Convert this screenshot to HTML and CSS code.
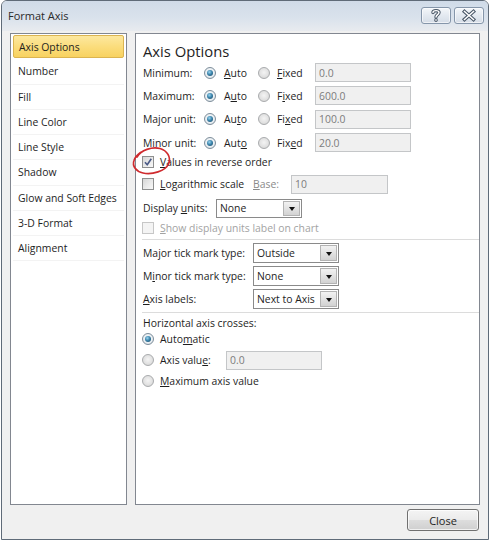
FILE: index.html
```html
<!DOCTYPE html>
<html>
<head>
<meta charset="utf-8">
<title>Format Axis</title>
<link rel="stylesheet" href="styles.css">
</head>
<body>
<div class="window">
  <div class="titlebar">
    <span class="title">Format Axis</span>
    <div class="tb-buttons">
      <div class="tb-btn">
        <svg class="tb-icon" viewBox="0 0 30 17" width="30" height="17">
          <g fill="none" stroke-linecap="round" stroke-linejoin="round">
            <path d="M12 5.6 C12 3, 18 3, 18 5.6 C18 7.6, 15 7.6, 15 10" stroke="#4a5868" stroke-width="3.4"/>
            <path d="M15 12.8 L15 13.2" stroke="#4a5868" stroke-width="3.4"/>
            <path d="M12 5.6 C12 3, 18 3, 18 5.6 C18 7.6, 15 7.6, 15 10" stroke="#ffffff" stroke-width="1.4"/>
            <path d="M15 12.8 L15 13.2" stroke="#ffffff" stroke-width="1.4"/>
          </g>
        </svg>
      </div>
      <div class="tb-btn">
        <svg class="tb-icon" viewBox="0 0 30 17" width="30" height="17">
          <g fill="none" stroke-linecap="square">
            <path d="M10.5 4.5 L19.5 12.5 M19.5 4.5 L10.5 12.5" stroke="#4a5868" stroke-width="3.6"/>
            <path d="M10.5 4.5 L19.5 12.5 M19.5 4.5 L10.5 12.5" stroke="#ffffff" stroke-width="1.5"/>
          </g>
        </svg>
      </div>
    </div>
  </div>

  <div class="content">
    <ul class="nav">
      <li class="nav-item active">Axis Options</li>
      <li class="nav-item">Number</li>
      <li class="nav-item">Fill</li>
      <li class="nav-item">Line Color</li>
      <li class="nav-item">Line Style</li>
      <li class="nav-item">Shadow</li>
      <li class="nav-item">Glow and Soft Edges</li>
      <li class="nav-item">3-D Format</li>
      <li class="nav-item">Alignment</li>
    </ul>

    <div class="pane">
      <div class="heading">Axis Options</div>

      <div class="opt-row">
        <span class="lbl">Minimum:</span>
        <span class="rg auto"><span class="radio on"></span><span><u>A</u>uto</span></span>
        <span class="rg fixed"><span class="radio"></span><span><u>F</u>ixed</span></span>
        <span class="input w96">0.0</span>
      </div>
      <div class="opt-row">
        <span class="lbl">Maximum:</span>
        <span class="rg auto"><span class="radio on"></span><span>A<u>u</u>to</span></span>
        <span class="rg fixed"><span class="radio"></span><span>F<u>i</u>xed</span></span>
        <span class="input w96">600.0</span>
      </div>
      <div class="opt-row">
        <span class="lbl">Major unit:</span>
        <span class="rg auto"><span class="radio on"></span><span>Au<u>t</u>o</span></span>
        <span class="rg fixed"><span class="radio"></span><span>Fi<u>x</u>ed</span></span>
        <span class="input w96">100.0</span>
      </div>
      <div class="opt-row">
        <span class="lbl">Minor unit:</span>
        <span class="rg auto"><span class="radio on"></span><span>Aut<u>o</u></span></span>
        <span class="rg fixed"><span class="radio"></span><span>Fix<u>e</u>d</span></span>
        <span class="input w96">20.0</span>
      </div>

      <div class="row h16">
        <span class="check on">
          <svg viewBox="0 0 12 12" width="12" height="12"><path d="M3 6.2 L5.2 8.8 L9.3 2.8" fill="none" stroke="#4b5a86" stroke-width="1.6" stroke-linejoin="round"/></svg>
        </span>
        <span class="cl"><u>V</u>alues in reverse order</span>
      </div>
      <div class="row h28">
        <span class="cgroup"><span class="check"></span><span class="cl"><u>L</u>ogarithmic scale</span></span>
        <span class="base-lbl"><u>B</u>ase:</span>
        <span class="input w97">10</span>
      </div>
      <div class="row h20">
        <span class="du-lbl">Display <u>u</u>nits:</span>
        <span class="select">
          <span class="sel-text">None</span>
          <span class="dd-btn"><span class="tri"></span></span>
        </span>
      </div>
      <div class="row h20">
        <span class="check disabled"></span>
        <span class="cl gray"><u>S</u>how display units label on chart</span>
      </div>

      <div class="sep sep-a"></div>

      <div class="row h20 mt3">
        <span class="tick-lbl">Ma<u>j</u>or tick mark type:</span>
        <span class="select tall">
          <span class="sel-text">Outside</span>
          <span class="dd-btn"><span class="tri"></span></span>
        </span>
      </div>
      <div class="row h20 mt3">
        <span class="tick-lbl">M<u>i</u>nor tick mark type:</span>
        <span class="select tall">
          <span class="sel-text">None</span>
          <span class="dd-btn"><span class="tri"></span></span>
        </span>
      </div>
      <div class="row h20 mt3">
        <span class="tick-lbl"><u>A</u>xis labels:</span>
        <span class="select tall">
          <span class="sel-text">Next to Axis</span>
          <span class="dd-btn"><span class="tri"></span></span>
        </span>
      </div>

      <div class="sep sep-b"></div>

      <div class="row h16 mt2">
        <span class="lbl-plain">Horizontal axis crosses:</span>
      </div>
      <div class="row h16">
        <span class="radio on"></span>
        <span class="cl">Auto<u>m</u>atic</span>
      </div>
      <div class="row h20 mt3">
        <span class="av-group"><span class="radio"></span><span class="cl">Axis valu<u>e</u>:</span></span>
        <span class="input w96">0.0</span>
      </div>
      <div class="row h16 mt3">
        <span class="radio"></span>
        <span class="cl"><u>M</u>aximum axis value</span>
      </div>
    </div>
  </div>

  <div class="footer">
    <div class="close-btn">Close</div>
  </div>

  <svg class="annot" viewBox="130 140 45 40" width="45" height="40">
    <path d="M137 157 C141 150, 152 146.5, 160 148.5 C167 150.5, 171.5 157, 168.5 164 C165.5 171, 152 175, 143 173 C136 171.5, 132 166, 134 160.5 C135 157.5, 137 155, 140.5 152.5" fill="none" stroke="#cf2a2e" stroke-width="1.7" stroke-linecap="round"/>
  </svg>
</div>
</body>
</html>
```

FILE: styles.css
```css
* {
  box-sizing: border-box;
}

body {
  margin: 0;
  background: #ffffff;
  font-family: "Open Sans", "Noto Sans", sans-serif;
  font-size: 10.4px;
  color: #1e1e1e;
}

u {
  text-decoration-thickness: 1px;
  text-underline-offset: 1px;
}

.window {
  position: relative;
  margin-left: 1px;
  width: 488px;
  height: 540px;
  border: 1px solid #5f6b78;
  border-radius: 6px 6px 0 0;
  background: #f0f0f0;
  display: flex;
  flex-direction: column;
  overflow: hidden;
}

/* Title bar */
.titlebar {
  height: 30px;
  flex: none;
  display: flex;
  align-items: center;
  justify-content: space-between;
  padding: 0 4px 0 6px;
  background: linear-gradient(#d0dbe8 0%, #d9e2ec 55%, #e8ebef 100%);
}

.title {
  font-size: 11px;
  color: #2a2a2a;
  margin-top: -1px;
}

.tb-buttons {
  display: flex;
  gap: 3px;
  margin-top: -1px;
}

.tb-btn {
  width: 30px;
  height: 17px;
  border: 1px solid #8596aa;
  border-radius: 3px;
  background: linear-gradient(#f4f7fa 0%, #e3e9f0 50%, #d5dde7 100%);
  box-shadow: inset 0 0 0 1px rgba(255, 255, 255, 0.6);
  display: flex;
  align-items: center;
  justify-content: center;
  overflow: hidden;
}

.tb-icon {
  display: block;
  flex: none;
}

/* Content */
.content {
  height: 474px;
  flex: none;
  display: flex;
  gap: 8px;
  padding: 2px 8px 0 8px;
}

.nav {
  width: 117px;
  height: 472px;
  flex: none;
  margin: 0;
  padding: 0 2px;
  list-style: none;
  background: #ffffff;
  border: 1px solid #828790;
}

.nav-item {
  height: 25.25px;
  display: flex;
  align-items: center;
  padding-left: 5px;
  border-bottom: 1px solid #f3f3f3;
  white-space: nowrap;
}

.nav-item.active {
  height: 23px;
  margin: 1px 0 1.25px;
  border: 1px solid #dbb450;
  border-radius: 2px;
  background: linear-gradient(#fde89f 0%, #fbdd7d 50%, #f8d260 100%);
}

.pane {
  flex: 1;
  height: 472px;
  background: #ffffff;
  border: 1px solid #828790;
  padding-left: 6px;
  display: flex;
  flex-direction: column;
}

.heading {
  font-size: 14.8px;
  line-height: 20px;
  height: 20px;
  margin-top: 7px;
  padding-left: 1px;
  color: #1e1e1e;
  flex: none;
}

.opt-row {
  height: 23.3px;
  flex: none;
  display: flex;
  align-items: center;
}

.row {
  flex: none;
  display: flex;
  align-items: center;
}

.h16 { height: 16px; }
.h20 { height: 20px; }
.h28 { height: 28px; }
.mt2 { margin-top: 2px; }
.mt3 { margin-top: 3px; }

.lbl {
  width: 62px;
  padding-left: 1px;
  flex: none;
}

.rg {
  display: flex;
  align-items: center;
  flex: none;
}

.rg.auto {
  width: 54px;
  gap: 8px;
}

.rg.fixed {
  width: 57px;
  gap: 7px;
}

.radio {
  width: 12px;
  height: 12px;
  flex: none;
  border-radius: 50%;
  border: 1px solid #a9abad;
  background: radial-gradient(circle at 50% 45%, #f4f4f4 0%, #e2e2e2 55%, #cfcfcf 100%);
  position: relative;
}

.radio.on {
  border-color: #7d8d9a;
  background: radial-gradient(circle at 50% 45%, #ffffff 0%, #e8eef2 60%, #c6d0d7 100%);
}

.radio.on::after {
  content: "";
  position: absolute;
  left: 2px;
  top: 2px;
  width: 6px;
  height: 6px;
  border-radius: 50%;
  background: radial-gradient(circle at 40% 35%, #9bd5f0 0%, #3d86ad 45%, #123f5c 100%);
}

.input {
  height: 19px;
  flex: none;
  display: flex;
  align-items: center;
  padding-left: 3px;
  border: 1px solid #c4c6c8;
  background: #f0f0f0;
  color: #7c7c7c;
}

.w96 { width: 96px; }
.w97 { width: 97px; }

.check {
  width: 12px;
  height: 12px;
  flex: none;
  border: 1px solid #8e8f8f;
  background: linear-gradient(135deg, #d6d6d6 0%, #ececec 60%, #f8f8f8 100%);
  display: flex;
}

.check svg {
  display: block;
  margin: -1px;
}

.check.disabled {
  border-color: #c7c7c7;
  background: #f4f4f4;
}

.cl {
  margin-left: 6px;
  white-space: nowrap;
}

.cl.gray {
  color: #a3a3a3;
}

.cgroup {
  width: 111px;
  flex: none;
  display: flex;
  align-items: center;
}

.base-lbl {
  width: 38px;
  flex: none;
  color: #8a8a8a;
}

.du-lbl {
  width: 74px;
  flex: none;
  padding-left: 1px;
}

.tick-lbl {
  width: 111px;
  flex: none;
  padding-left: 1px;
}

.lbl-plain {
  padding-left: 1px;
}

.av-group {
  width: 84px;
  flex: none;
  display: flex;
  align-items: center;
}

.select {
  width: 86px;
  height: 19px;
  flex: none;
  display: flex;
  padding: 1px;
  border: 1px solid #8a8a8a;
  background: #ffffff;
}

.select.tall {
  height: 20px;
}

.sel-text {
  flex: 1;
  display: flex;
  align-items: center;
  padding-left: 2px;
  white-space: nowrap;
  overflow: hidden;
}

.dd-btn {
  width: 17px;
  flex: none;
  display: flex;
  align-items: center;
  justify-content: center;
  border: 1px solid #b3b3b3;
  background: linear-gradient(#f2f2f2 0%, #e2e2e2 50%, #d2d2d2 100%);
}

.tri {
  width: 0;
  height: 0;
  border-left: 3.5px solid transparent;
  border-right: 3.5px solid transparent;
  border-top: 4px solid #111111;
  margin-top: 1px;
}

.sep {
  height: 1px;
  flex: none;
  background: #dcdcdc;
}

.sep-a { margin-top: 1px; }
.sep-b { margin-top: 3px; }

/* Footer */
.footer {
  flex: none;
  display: flex;
  justify-content: flex-end;
  padding: 4px 9px 0 0;
}

.close-btn {
  width: 72px;
  height: 22px;
  display: flex;
  align-items: center;
  justify-content: center;
  border: 1px solid #707070;
  border-radius: 3px;
  background: linear-gradient(#f4f4f4 0%, #ebebeb 48%, #dddddd 52%, #cfcfcf 100%);
  box-shadow: inset 0 0 0 1px rgba(255, 255, 255, 0.7);
  font-size: 11px;
  color: #1e1e1e;
}

/* Hand-drawn annotation over the checkbox */
.annot {
  position: absolute;
  left: 128px;
  top: 139px;
  pointer-events: none;
}
```
